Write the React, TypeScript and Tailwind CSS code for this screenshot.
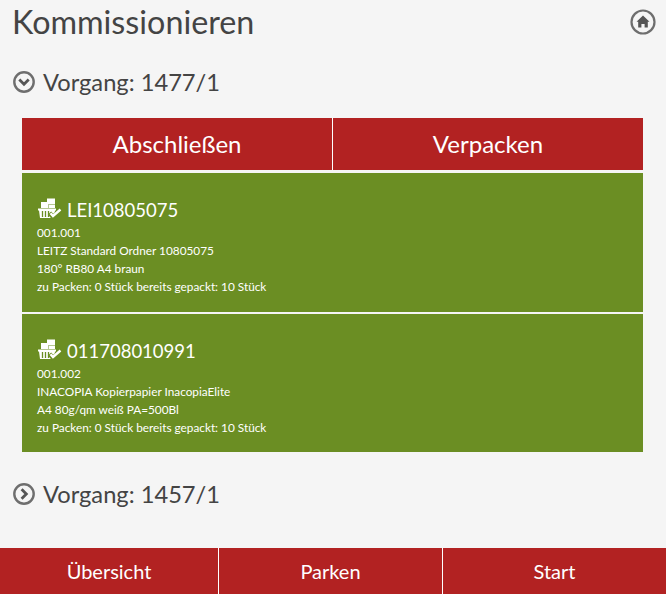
import { FC } from 'react';

const FONT = "font-['Lato','Open_Sans',sans-serif]";

const ITEMS = [
  {
    code: 'LEI10805075',
    pos: '001.001',
    line1: 'LEITZ Standard Ordner 10805075',
    line2: '180° RB80 A4 braun',
    status: 'zu Packen: 0 Stück bereits gepackt: 10 Stück',
  },
  {
    code: '011708010991',
    pos: '001.002',
    line1: 'INACOPIA Kopierpapier InacopiaElite',
    line2: 'A4 80g/qm weiß PA=500Bl',
    status: 'zu Packen: 0 Stück bereits gepackt: 10 Stück',
  },
];

const CircleIcon: FC<{ dir: 'down' | 'right' }> = ({ dir }) => (
  <svg width="22" height="22" viewBox="0 0 22 22" className="shrink-0">
    <circle cx="11" cy="11" r="9.7" fill="none" stroke="#6e6e6e" strokeWidth="2.4" />
    <path
      d={dir === 'down' ? 'M6.3 8.6 L11 13.3 L15.7 8.6' : 'M8.6 6.3 L13.3 11 L8.6 15.7'}
      fill="none"
      stroke="#555"
      strokeWidth="2.8"
    />
  </svg>
);

const HomeIcon: FC = () => (
  <svg width="26" height="26" viewBox="0 0 26 26">
    <circle cx="13" cy="13" r="11.5" fill="none" stroke="#6e6e6e" strokeWidth="2.2" />
    <path d="M13 6.5 L19.5 12.8 L17.8 12.8 L17.8 18.5 L14.6 18.5 L14.6 15 L11.4 15 L11.4 18.5 L8.2 18.5 L8.2 12.8 L6.5 12.8 Z" fill="#555" />
  </svg>
);

const PackedIcon: FC = () => (
  <svg width="24" height="22" viewBox="0 0 24 22" className="mb-[3px] shrink-0">
    <rect x="9" y="0.5" width="8" height="6" fill="#fff" />
    <rect x="3" y="4" width="7" height="6" fill="#fff" />
    <rect x="10.5" y="7" width="6.5" height="3" fill="#fff" />
    <path d="M0 10.5 H18 V12.5 H17 L16 20 H2 L1 12.5 H0 Z" fill="#fff" />
    <path d="M4.5 13 V19 M7.5 13 V19 M10.5 13 V19" stroke="#6b8e23" strokeWidth="1.3" />
    <path d="M11.5 15 L15 19 L23 12" fill="none" stroke="#6b8e23" strokeWidth="4.5" />
    <path d="M12.5 15.2 L15 18 L22.5 11.5" fill="none" stroke="#fff" strokeWidth="2.4" />
  </svg>
);

const App: FC = () => {
  return (
    <div className={`${FONT} flex h-[594px] w-[666px] flex-col bg-[#f5f5f5] text-[#444]`}>
      <div className="flex h-[44px] items-center justify-between pl-[12px] pr-[10px]">
        <h1 className="text-[32.3px] leading-[44px]">Kommissionieren</h1>
        <HomeIcon />
      </div>

      <div className="mt-[22px] flex h-[32px] items-center gap-[8px] pl-[13px]">
        <CircleIcon dir="down" />
        <span className="text-[23.7px] leading-[32px]">Vorgang: 1477/1</span>
      </div>

      <div className="ml-[22px] mr-[23px] mt-[20px] flex flex-col">
        <div className="flex h-[52px] bg-[#b22222] text-[24px] text-white">
          <div className="flex w-[311px] items-center justify-center border-r border-white">Abschließen</div>
          <div className="flex flex-1 items-center justify-center">Verpacken</div>
        </div>

        {ITEMS.map((item, i) => (
          <div
            key={item.code}
            className={`${i === 0 ? 'mt-[3px] h-[139px]' : 'mt-[2px] h-[138px]'} bg-[#6b8e23] pl-[16px] pt-[23px] text-white`}
          >
            <div className="flex h-[28px] items-center gap-[5px]">
              <PackedIcon />
              <span className="mt-[2px] text-[18.5px]">{item.code}</span>
            </div>
            <div className="-ml-px text-[11.8px] leading-[18px]">
              <div>{item.pos}</div>
              <div>{item.line1}</div>
              <div>{item.line2}</div>
              <div>{item.status}</div>
            </div>
          </div>
        ))}
      </div>

      <div className="mt-[26px] flex h-[32px] items-center gap-[8px] pl-[13px]">
        <CircleIcon dir="right" />
        <span className="text-[23.7px] leading-[32px]">Vorgang: 1457/1</span>
      </div>

      <div className="mt-auto flex h-[46px] bg-[#b22222] text-[20px] text-white">
        <div className="flex w-[219px] items-center justify-center border-r border-white">Übersicht</div>
        <div className="flex w-[224px] items-center justify-center border-r border-white">Parken</div>
        <div className="flex flex-1 items-center justify-center">Start</div>
      </div>
    </div>
  );
};

export default App;
